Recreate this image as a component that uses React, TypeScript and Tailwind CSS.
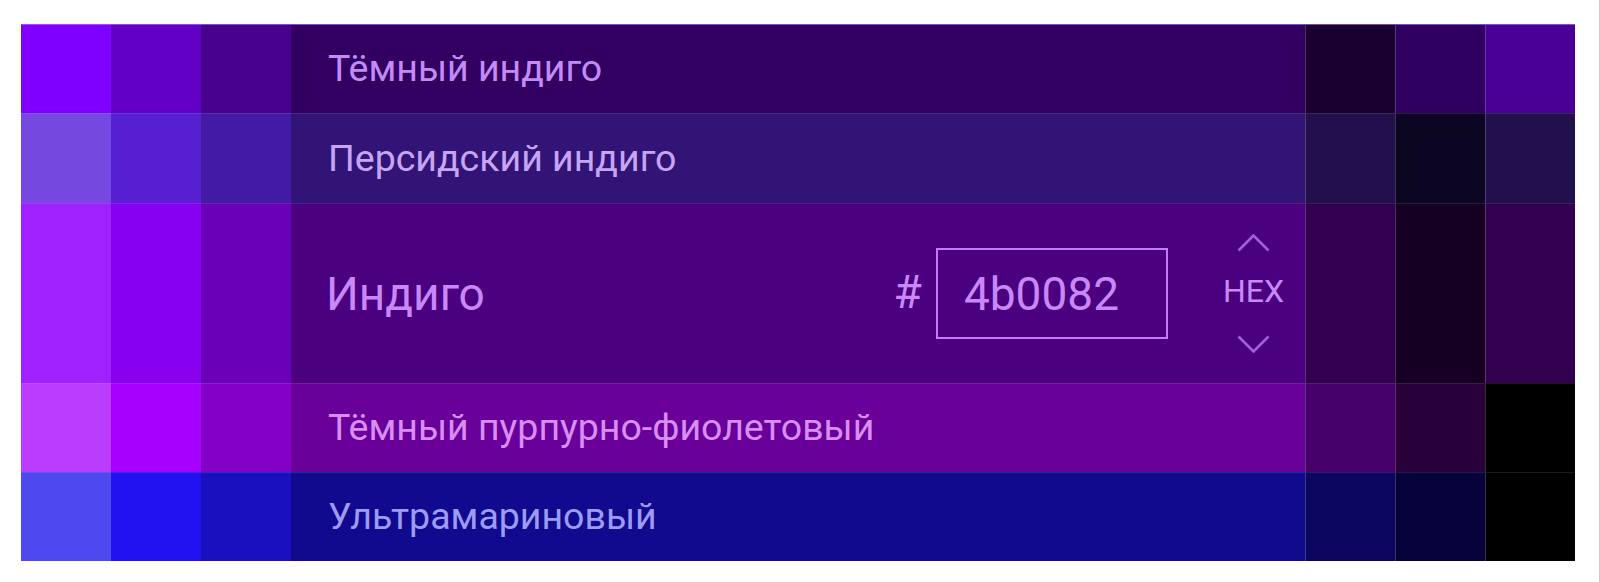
import React from "react";

type Row = {
  name: string;
  h: string;
  left: string[];
  main: string;
  right: string[];
  text: string;
  active?: boolean;
};

const rows: Row[] = [
  {
    name: "Тёмный индиго",
    h: "h-[89px]",
    left: ["#7f00ff", "#6000c6", "#48008f"],
    main: "#310060",
    right: ["#1a0030", "#300060", "#4a0096"],
    text: "#c48bf8",
  },
  {
    name: "Персидский индиго",
    h: "h-[90px]",
    left: ["#7548e0", "#561fd2", "#431aa3"],
    main: "#321477",
    right: ["#22104c", "#0d0622", "#22104c"],
    text: "#c6a6f4",
  },
  {
    name: "Индиго",
    h: "h-[180px]",
    left: ["#a020ff", "#8700ef", "#6a00b8"],
    main: "#4b0080",
    right: ["#33004f", "#150024", "#33004f"],
    text: "#c888f8",
    active: true,
  },
  {
    name: "Тёмный пурпурно-фиолетовый",
    h: "h-[89px]",
    left: ["#b93cff", "#a500ff", "#8400c8"],
    main: "#690099",
    right: ["#45006a", "#28003a", "#000000"],
    text: "#d88ef4",
  },
  {
    name: "Ультрамариновый",
    h: "h-[89px]",
    left: ["#4e48ef", "#2211f0", "#1a10c0"],
    main: "#120a8e",
    right: ["#0c0660", "#05033a", "#000000"],
    text: "#9c9cf4",
  },
];

function Chevron({ up }: { up?: boolean }) {
  return (
    <svg width="33" height="18" viewBox="0 0 33 18" fill="none" className="block">
      <polyline
        points={up ? "1.5,16.5 16.5,1.5 31.5,16.5" : "1.5,1.5 16.5,16.5 31.5,1.5"}
        stroke="#a25ee0"
        strokeWidth="2.6"
      />
    </svg>
  );
}

export default function App() {
  return (
    <div
      className="w-[1600px] h-[582px] bg-white border-r border-[#cdcdcd] pt-[24px] pl-[21px]"
      style={{ fontFamily: "Roboto, 'Noto Sans', sans-serif" }}
    >
      <div className="flex flex-col w-[1554px]">
        {rows.map((r, i) => {
          const line = i > 0 ? "border-t border-white/10" : "border-t border-[#c27cf0]/60";
          return (
            <div key={i} className={`flex ${r.h}`}>
              {r.left.map((c, j) => (
                <div key={j} className={`w-[90px] shrink-0 ${line}`} style={{ backgroundColor: c }} />
              ))}
              <div
                className={`flex-1 flex items-center pl-[37px] pr-[21px] ${line}`}
                style={{ backgroundColor: r.main, color: r.text }}
              >
                {r.active ? (
                  <>
                    <div className="flex-1 text-[46px] leading-none -ml-[2px]">{r.name}</div>
                    <div className="text-[46px] leading-none mr-[14px] -mt-[4px]">#</div>
                    <div className="w-[232px] h-[91px] border-2 border-[#c47cf6] flex items-center pl-[26px]">
                      <span className="text-[46px] leading-none">4b0082</span>
                    </div>
                    <div className="ml-[55px] flex flex-col items-center">
                      <Chevron up />
                      <span className="text-[32px] leading-none mt-[23px] mb-[28px]">HEX</span>
                      <Chevron />
                    </div>
                  </>
                ) : (
                  <div className="text-[37.5px] leading-none">{r.name}</div>
                )}
              </div>
              {r.right.map((c, j) => (
                <div
                  key={j}
                  className={`w-[90px] shrink-0 border-l border-l-white/20 ${line}`}
                  style={{ backgroundColor: c }}
                />
              ))}
            </div>
          );
        })}
      </div>
    </div>
  );
}
